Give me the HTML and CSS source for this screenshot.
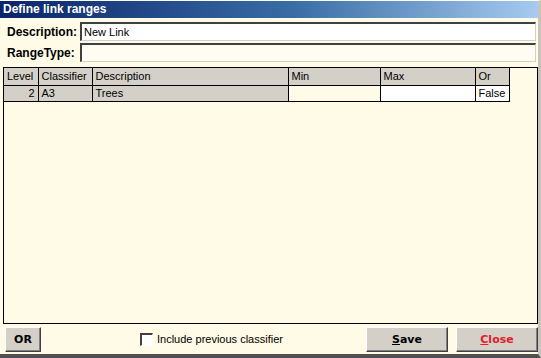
FILE: index.html
```html
<!DOCTYPE html>
<html lang="en">

<head>
    <meta charset="UTF-8">
    <title>Define link ranges</title>
    <link rel="stylesheet" href="styles.css">
</head>

<body>
    <div class="win">
        <div class="title">Define link ranges</div>

        <div class="content">
            <div class="field">
                <label>Description:</label>
                <input type="text" class="box" value="New Link" />
            </div>
            <div class="field">
                <label>RangeType:</label>
                <input type="text" class="box cream" value="" />
            </div>

            <div class="grid">
                <table>
                    <tr class="head">
                        <td class="c-level">Level</td>
                        <td class="c-class">Classifier</td>
                        <td class="c-desc">Description</td>
                        <td class="c-min">Min</td>
                        <td class="c-max">Max</td>
                        <td class="c-or">Or</td>
                    </tr>
                    <tr>
                        <td class="fixed num">2</td>
                        <td class="fixed">A3</td>
                        <td class="fixed">Trees</td>
                        <td class="cream"></td>
                        <td class="white"></td>
                        <td class="white">False</td>
                    </tr>
                </table>
            </div>

            <div class="foot">
                <button class="btn small">OR</button>
                <label class="check">
                    <span class="tick"></span>
                    <span>Include previous classifier</span>
                </label>
                <div class="right">
                    <button class="btn wide"><u>S</u>ave</button>
                    <button class="btn wide red"><u>C</u>lose</button>
                </div>
            </div>
        </div>
    </div>
</body>

</html>
```

FILE: styles.css
```css
body {
    margin: 0;
    background: #404040;
    font-family: "Liberation Sans", Arial, sans-serif;
    font-size: 11px;
}

.win {
    width: 541px;
    height: 358px;
    box-sizing: border-box;
    background: #fffbe6;
    border-top: 1px solid #ffffff;
    border-right: 3px solid #c8c4bc;
    border-bottom: 4px solid #505050;
    display: flex;
    flex-direction: column;
}

.title {
    height: 17px;
    line-height: 17px;
    padding-left: 3px;
    color: #ffffff;
    font-weight: bold;
    font-size: 12px;
    background: linear-gradient(to right, #0a246a, #3a6ea5 55%, #a6caf0);
}

.content {
    flex: 1;
    display: flex;
    flex-direction: column;
    padding: 3px 0 0 3px;
}

.field {
    display: flex;
    align-items: center;
    height: 21px;
}

.field label {
    width: 77px;
    padding-left: 4px;
    box-sizing: border-box;
    font-weight: bold;
    font-size: 12px;
}

.box {
    flex: 1;
    height: 19px;
    box-sizing: border-box;
    margin-right: 2px;
    padding: 0 2px;
    border: 1px solid #d4d0c8;
    border-top: 2px solid #404040;
    border-left: 2px solid #404040;
    font-family: "Liberation Sans", Arial, sans-serif;
    font-size: 11px;
    background: #ffffff;
}

.box.cream {
    background: #fffdf2;
}

.grid {
    flex: 1;
    margin-top: 4px;
    border: 1px solid #000000;
    margin-right: 0;
}

table {
    border-collapse: collapse;
}

td {
    height: 16px;
    padding: 0 3px;
    border: 1px solid #000000;
    white-space: nowrap;
    box-sizing: border-box;
}

tr:first-child td {
    border-top: 0;
}

td:first-child {
    border-left: 0;
}

.head td {
    background: #d4d0c8;
    height: 17px;
}

.c-level { width: 34px; }
.c-class { width: 54px; }
.c-desc { width: 196px; }
.c-min { width: 92px; }
.c-max { width: 95px; }
.c-or { width: 34px; }

.fixed {
    background: #d4d0c8;
}

.num {
    text-align: right;
}

td.cream {
    background: #fffbe6;
}

td.white {
    background: #ffffff;
}

.foot {
    height: 30px;
    display: flex;
    align-items: center;
    padding-left: 2px;
}

.btn {
    height: 25px;
    box-sizing: border-box;
    background: #d4d0c8;
    border: 1px solid;
    border-color: #ffffff #404040 #404040 #ffffff;
    box-shadow: inset -1px -1px #808080;
    font-family: "DejaVu Sans", Verdana, sans-serif;
    font-weight: bold;
    font-size: 11px;
    padding: 0;
}

.btn.small {
    width: 36px;
}

.btn.wide {
    width: 82px;
}

.btn.red {
    color: #e0202a;
}

.check {
    display: flex;
    align-items: center;
    gap: 4px;
    margin-left: 99px;
}

.tick {
    width: 13px;
    height: 13px;
    box-sizing: border-box;
    background: #ffffff;
    border: 1px solid #ffffff;
    border-top: 2px solid #404040;
    border-left: 2px solid #404040;
    box-shadow: 0 0 0 0 transparent;
}

.right {
    margin-left: auto;
    display: flex;
    gap: 8px;
}
```
